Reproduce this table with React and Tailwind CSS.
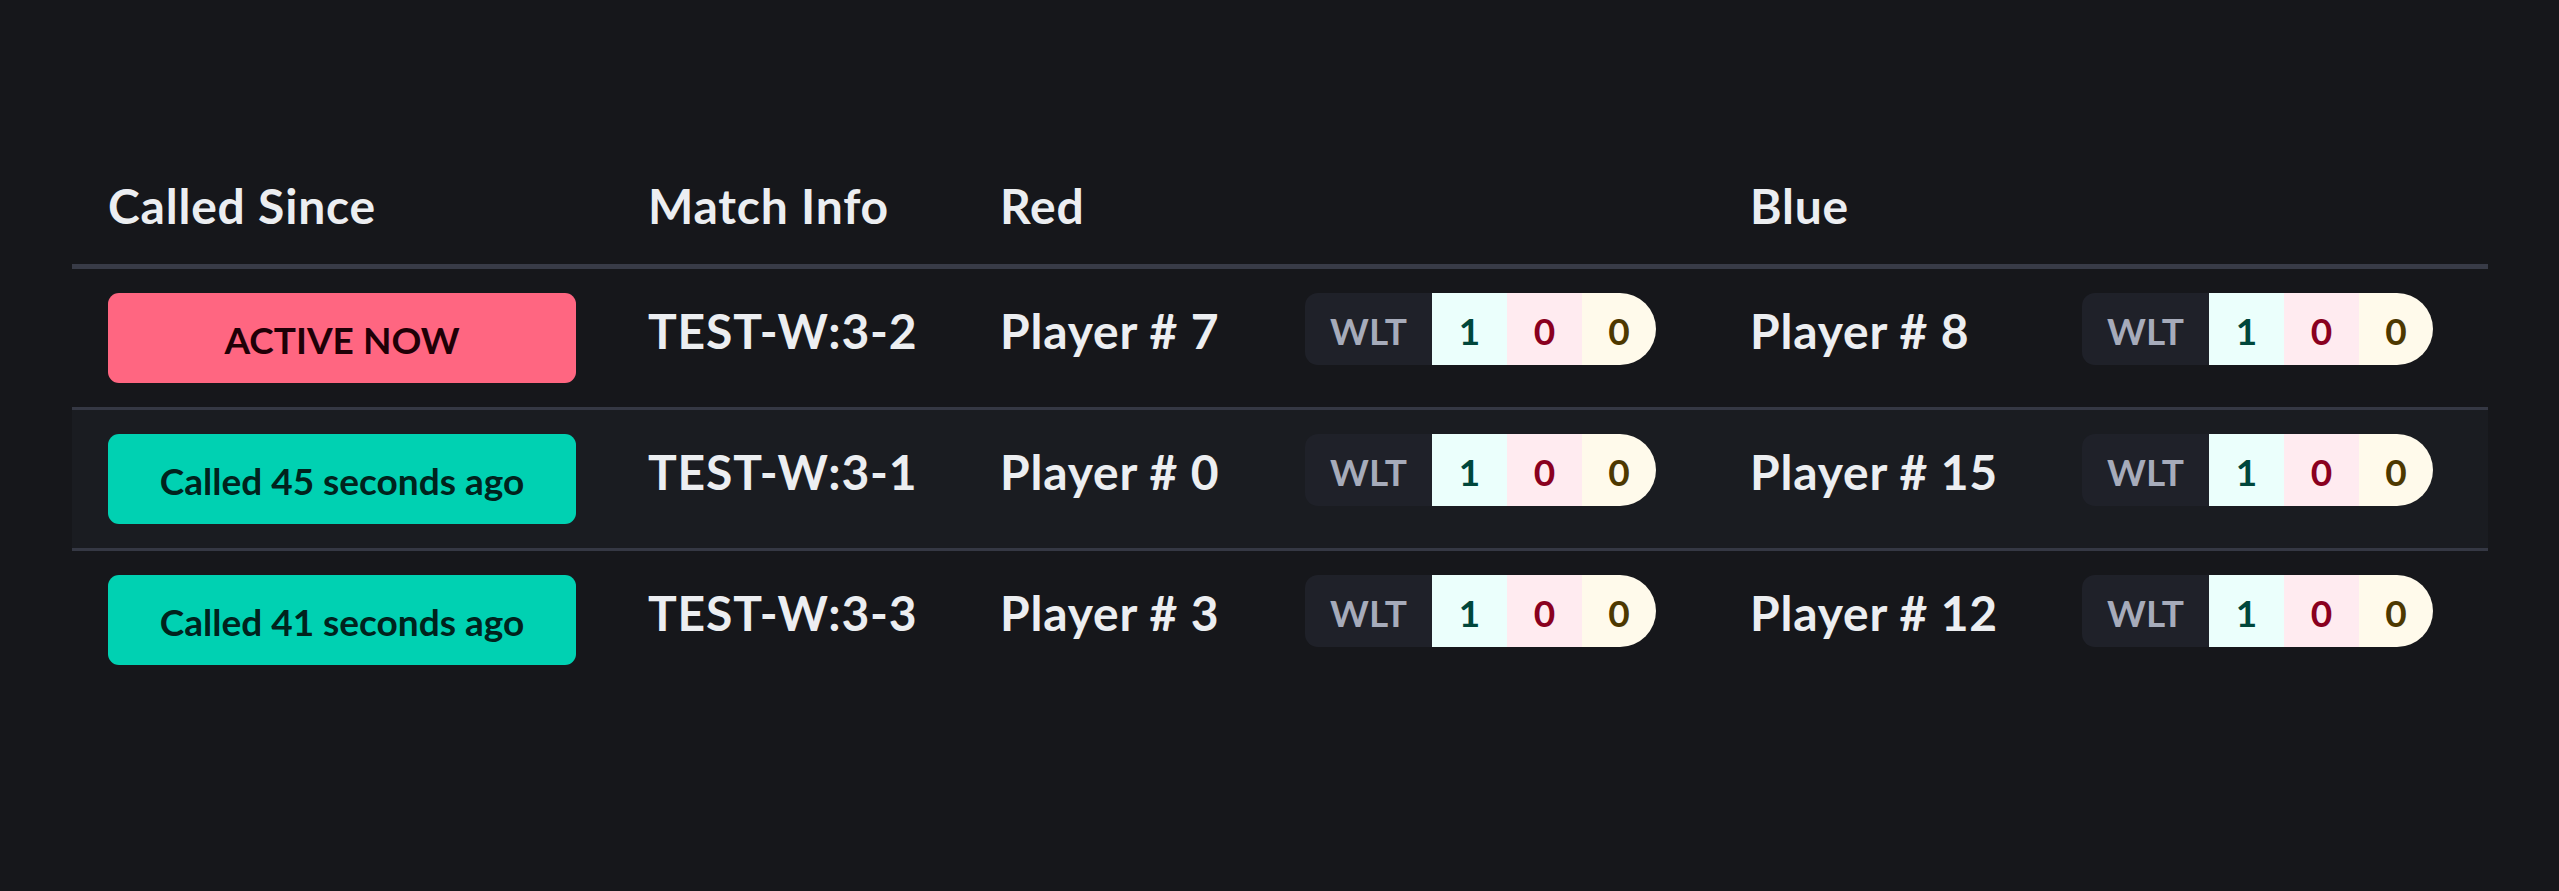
import React from "react";

const rows = [
  { status: "ACTIVE NOW", active: true, match: "TEST-W:3-2", red: "Player # 7", blue: "Player # 8", striped: false },
  { status: "Called 45 seconds ago", active: false, match: "TEST-W:3-1", red: "Player # 0", blue: "Player # 15", striped: true },
  { status: "Called 41 seconds ago", active: false, match: "TEST-W:3-3", red: "Player # 3", blue: "Player # 12", striped: false },
];

function Badge() {
  return (
    <div className="flex h-[72px] text-[37px] font-bold leading-none">
      <div className="flex w-[127px] items-center justify-center rounded-l-[13px] bg-[#1f2129] pt-[2px] text-[#a6abba]">WLT</div>
      <div className="flex w-[75px] items-center justify-center bg-[#ebfffc] pt-[2px] text-[#00473b]">1</div>
      <div className="flex w-[75px] items-center justify-center bg-[#ffebf0] pt-[2px] text-[#8a001f]">0</div>
      <div className="flex w-[74px] items-center justify-center rounded-r-full bg-[#fffaeb] pt-[2px] text-[#4d3800]">0</div>
    </div>
  );
}

const cols = "grid grid-cols-[540px_352px_305px_445px_332px_442px]";

export default function App() {
  return (
    <div className="min-h-screen w-full bg-[#16171b] font-[family-name:Lato,sans-serif] text-[#eceef1]">
      <div className="pt-[144px] pl-[72px]">
        <div className="w-[2416px]">
          <div className={`${cols} border-b-[5px] border-[#383b47] text-[48px] leading-[72px] font-bold tracking-[0.8px]`}>
            <div className="pl-[36px] pt-[26px] pb-[22px]">Called Since</div>
            <div className="pl-[36px] pt-[26px] pb-[22px]">Match Info</div>
            <div className="col-span-2 pl-[36px] pt-[26px] pb-[22px]">Red</div>
            <div className="col-span-2 pl-[36px] pt-[26px] pb-[22px]">Blue</div>
          </div>
          {rows.map((r, i) => (
            <div
              key={i}
              className={`${cols} items-start py-[24px] text-[48px] leading-[72px] font-bold ${r.striped ? "bg-[#1a1c21]" : ""} ${i < rows.length - 1 ? "border-b-[3px] border-[#353844]" : ""}`}
            >
              <div className="pl-[36px]">
                <div
                  className={`flex h-[90px] w-[468px] items-center justify-center rounded-[11px] pt-[2px] text-[37px] leading-none font-bold ${r.active ? "bg-[#ff6681] text-[#1f0007]" : "bg-[#00d1b2] text-[#00231d]"}`}
                >
                  {r.status}
                </div>
              </div>
              <div className="pl-[36px] pt-[2px] whitespace-nowrap tracking-[0.8px]">{r.match}</div>
              <div className="pl-[36px] pt-[2px] whitespace-nowrap tracking-[0.8px]">{r.red}</div>
              <div className="pl-[36px]"><Badge /></div>
              <div className="pl-[36px] pt-[2px] whitespace-nowrap tracking-[0.8px]">{r.blue}</div>
              <div className="pl-[36px]"><Badge /></div>
            </div>
          ))}
        </div>
      </div>
    </div>
  );
}
